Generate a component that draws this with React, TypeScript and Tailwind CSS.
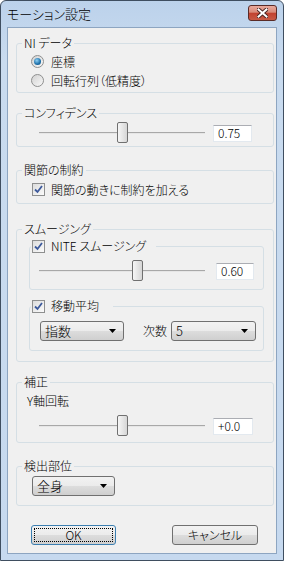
import React from 'react'

const font = "font-['Noto_Sans_CJK_JP',sans-serif] font-light [font-feature-settings:'palt']"

const Legend = ({ children }: { children: React.ReactNode }) => (
  <legend className="ml-[5px] px-[2px] h-[14px] leading-[14px] text-[12px] text-black">{children}</legend>
)

const Radio = ({ checked, label }: { checked?: boolean; label: string }) => (
  <div className="flex items-center h-[19px]">
    <span className="w-[13px] h-[13px] rounded-full border border-[#8e8f8f] bg-[linear-gradient(135deg,#d2d2d2,#f8f8f8)] flex items-center justify-center">
      {checked && (
        <span className="w-[7px] h-[7px] rounded-full bg-[radial-gradient(circle_at_40%_35%,#8fd1f5,#1b6ea8_60%,#0b4a7a)]" />
      )}
    </span>
    <span className="ml-[7px] text-[12px] leading-[14px]">{label}</span>
  </div>
)

const Check = () => (
  <span className="w-[13px] h-[13px] border border-[#8e8f8f] bg-[linear-gradient(135deg,#dcdcdc,#fbfbfb)] flex items-center justify-center shrink-0">
    <svg width="9" height="9" viewBox="0 0 9 9">
      <path d="M1 4.5 L3.5 7 L8 1" fill="none" stroke="#3d5a9c" strokeWidth="1.8" />
    </svg>
  </span>
)

const Slider = ({ thumb }: { thumb: number }) => (
  <div className="relative w-[166px] h-[24px] flex items-center">
    <div className="w-full h-[2px] border-t border-[#a8a8a8] border-b border-b-[#e6e6e6]" />
    <div
      className="absolute top-[1px] w-[11px] h-[21px] rounded-[2px] border border-[#707070] bg-[linear-gradient(90deg,#f6f6f6,#e6e6e6_50%,#d6d6d6)]"
      style={{ left: thumb }}
    />
  </div>
)

const TextBox = ({ value, className = '' }: { value: string; className?: string }) => (
  <div className={`h-[17px] bg-white border border-[#e3e9ef] border-t-[#abadb3] flex items-center pl-[4px] text-[12px] leading-none ${className}`}>
    {value}
  </div>
)

const Combo = ({ value, className = '' }: { value: string; className?: string }) => (
  <div className={`h-[20px] rounded-[3px] border border-[#707070] bg-[linear-gradient(#f2f2f2,#ebebeb_50%,#dddddd_50%,#cfcfcf)] flex items-center justify-between pl-[4px] pr-[7px] text-[13px] ${className}`}>
    <span>{value}</span>
    <svg width="7" height="4" viewBox="0 0 7 4">
      <path d="M0 0 H7 L3.5 4 Z" fill="#000" />
    </svg>
  </div>
)

const Button = ({ label, focused }: { label: string; focused?: boolean }) => (
  <div
    className={`relative h-[20px] rounded-[3px] border flex items-center justify-center text-[12px] bg-[linear-gradient(#f2f2f2,#ebebeb_50%,#dddddd_50%,#cfcfcf)] ${
      focused ? 'w-[85px] border-[#3c7fb1]' : 'w-[86px] border-[#707070]'
    }`}
  >
    {focused && <span className="absolute inset-[2px] border border-dotted border-black" />}
    <span className="relative">{label}</span>
  </div>
)

const box = 'ml-[8px] w-[258px] border border-[#d5dfe5] rounded-[3px]'

export default function App() {
  return (
    <div className={`w-[284px] h-[561px] ${font} text-black`}>
      <div className="w-full h-full flex flex-col border border-[#3f4e60] rounded-t-[6px] bg-[linear-gradient(#bcd2eb,#c9dbef_60px,#c6d9ef)]">
        {/* title bar */}
        <div className="h-[26px] flex items-start justify-between pl-[6px] pr-[6px]">
          <span className="mt-[5px] text-[13px] leading-[15px] text-black">モーション設定</span>
          <div className="mt-[4px] w-[29px] h-[16px] rounded-[3px] border border-[#5a2b27] bg-[linear-gradient(#e9a99c,#d88a79_45%,#c2412f_50%,#c75a45)] flex items-center justify-center">
            <svg width="11" height="10" viewBox="0 0 11 10">
              <path d="M1.5 1.5 L9.5 8.5 M9.5 1.5 L1.5 8.5" stroke="#4a2422" strokeWidth="4" strokeLinecap="square" />
              <path d="M1.5 1.5 L9.5 8.5 M9.5 1.5 L1.5 8.5" stroke="#fff" strokeWidth="2" strokeLinecap="square" />
            </svg>
          </div>
        </div>

        {/* client area */}
        <div className="flex-1 mx-[6px] mb-[6px] border border-[#8da5c1] bg-[#f0f0f0] flex flex-col">
          {/* NI データ */}
          <fieldset className={`${box} mt-[8px] pb-[2px]`}>
            <Legend>NI データ</Legend>
            <div className="mt-[2px] pl-[14px]">
              <Radio checked label="座標" />
              <Radio label="回転行列（低精度）" />
            </div>
          </fieldset>

          {/* コンフィデンス */}
          <fieldset className={`${box} mt-[13px] pb-[1px]`}>
            <Legend>コンフィデンス</Legend>
            <div className="flex items-center h-[24px] mt-[1px] pl-[22px]">
              <Slider thumb={78} />
              <TextBox value="0.75" className="ml-[8px] w-[39px]" />
            </div>
          </fieldset>

          {/* 関節の制約 */}
          <fieldset className={`${box} mt-[16px] pb-[4px]`}>
            <Legend>関節の制約</Legend>
            <div className="flex items-center h-[19px] mt-[3px] pl-[15px]">
              <Check />
              <span className="ml-[6px] text-[12px]">関節の動きに制約を加える</span>
            </div>
          </fieldset>

          {/* スムージング */}
          <fieldset className={`${box} mt-[18px] pb-[10px]`}>
            <Legend>スムージング</Legend>

            <fieldset className="ml-[12px] mt-[3px] w-[235px] border border-[#d5dfe5] rounded-[3px] pb-[6px]">
              <legend className="ml-[1px] px-[1px] pr-[10px] h-[14px] flex items-center text-[12px]">
                <Check />
                <span className="ml-[6px]">NITE スムージング</span>
              </legend>
              <div className="flex items-center h-[24px] mt-[6px] pl-[9px]">
                <Slider thumb={93} />
                <TextBox value="0.60" className="ml-[11px] w-[38px]" />
              </div>
            </fieldset>

            <fieldset className="ml-[12px] mt-[9px] w-[235px] border border-[#d5dfe5] rounded-[3px] pb-[9px]">
              <legend className="ml-[1px] px-[1px] pr-[14px] h-[14px] flex items-center text-[12px]">
                <Check />
                <span className="ml-[6px]">移動平均</span>
              </legend>
              <div className="flex items-center mt-[8px] pl-[10px]">
                <Combo value="指数" className="w-[84px]" />
                <span className="ml-[19px] text-[12px]">次数</span>
                <Combo value="5" className="ml-[4px] w-[85px]" />
              </div>
            </fieldset>
          </fieldset>

          {/* 補正 */}
          <fieldset className={`${box} mt-[13px] pb-[4px]`}>
            <Legend>補正</Legend>
            <div className="ml-[10px] mt-[5px] h-[14px] leading-[14px] text-[12px]">Y軸回転</div>
            <div className="flex items-center h-[24px] mt-[6px] pl-[22px]">
              <Slider thumb={78} />
              <TextBox value="+0.0" className="ml-[8px] w-[40px]" />
            </div>
          </fieldset>

          {/* 検出部位 */}
          <fieldset className={`${box} mt-[16px] pb-[9px]`}>
            <Legend>検出部位</Legend>
            <div className="pl-[15px] mt-[3px]">
              <Combo value="全身" className="w-[83px]" />
            </div>
          </fieldset>

          {/* buttons */}
          <div className="flex mt-[19px] pl-[23px]">
            <Button label="OK" focused />
            <div className="ml-[56px]">
              <Button label="キャンセル" />
            </div>
          </div>
        </div>
      </div>
    </div>
  )
}
